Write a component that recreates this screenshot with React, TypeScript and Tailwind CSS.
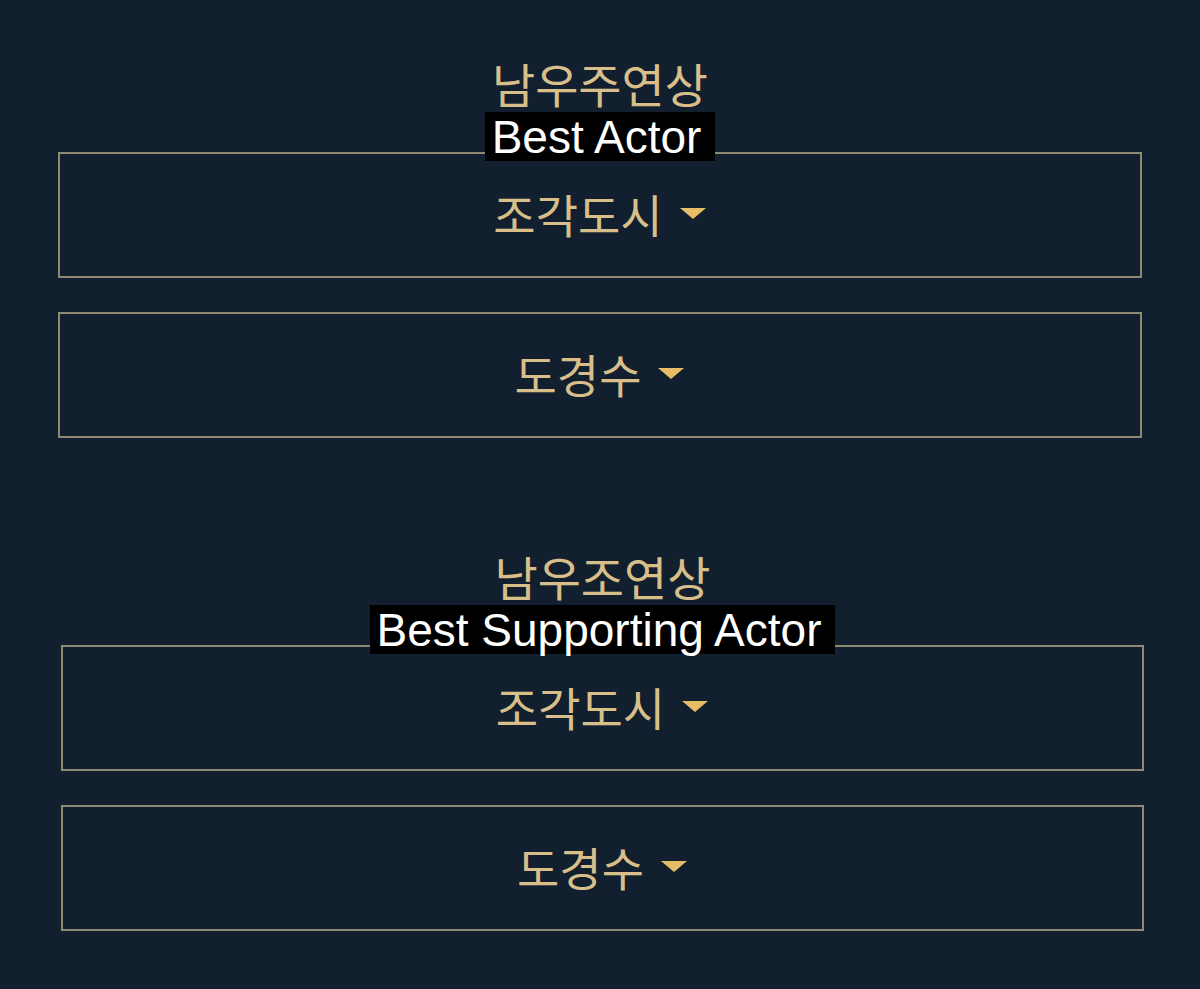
const ko = "font-['Noto_Sans_CJK_KR','Noto_Sans',sans-serif]";

interface AwardProps {
    title: string;
    caption: string;
    nominees: string[];
    shifted?: boolean;
}

function Caret() {
    return (
        <svg width="28" height="13" viewBox="0 0 28 13" className="ml-[16px] mt-[2px]">
            <polygon points="1,1 27,1 14,12" fill="#e6bd66" />
        </svg>
    );
}

function Award({ title, caption, nominees, shifted }: AwardProps) {
    return (
        <div className={shifted ? "flex flex-col ml-[61px] mr-[56px]" : "flex flex-col mx-[58px]"}>
            <div className={`${ko} text-center text-[47px] leading-[50px] text-[#d8bf8a]`}>{title}</div>
            <div className="relative z-10 self-center mt-[4px] bg-black pl-[7px] pr-[14px] h-[49px] flex items-center font-['Liberation_Sans',Arial,sans-serif] text-[46px] leading-none text-white">
                {caption}
            </div>
            <div className="flex flex-col gap-[34px] -mt-[9px]">
                {nominees.map((name, i) => (
                    <div
                        key={i}
                        className="h-[126px] border-2 border-[#8e8a72] flex items-center justify-center pb-[5px]"
                    >
                        <span className={`${ko} text-[46px] leading-none text-[#d8bf8a]`}>{name}</span>
                        <Caret />
                    </div>
                ))}
            </div>
        </div>
    );
}

export default function App() {
    return (
        <div className="w-[1200px] h-[989px] bg-[#121f2f] pt-[58px] overflow-hidden">
            <Award title="남우주연상" caption="Best Actor" nominees={["조각도시", "도경수"]} />
            <div className="h-[113px]" />
            <Award title="남우조연상" caption="Best Supporting Actor" nominees={["조각도시", "도경수"]} shifted />
        </div>
    );
}
